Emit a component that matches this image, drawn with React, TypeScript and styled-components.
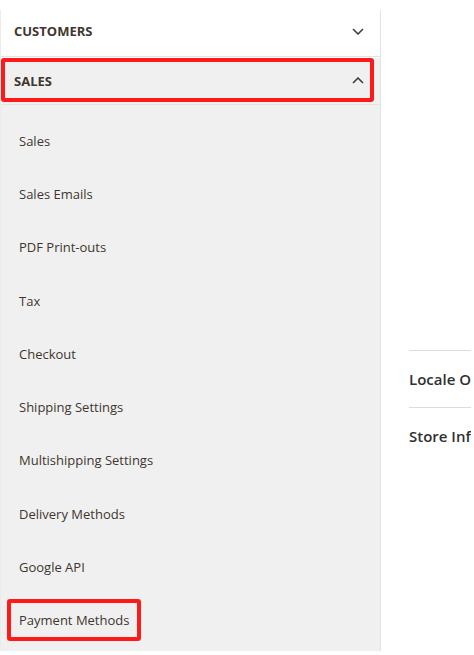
import styled, { createGlobalStyle } from 'styled-components'

const GlobalStyle = createGlobalStyle`
  html, body {
    margin: 0;
    padding: 0;
    background: #ffffff;
    overflow: hidden;
  }
  body {
    font-family: 'Open Sans', 'Liberation Sans', sans-serif;
    color: #333333;
  }
`

const salesLinks = [
  'Sales',
  'Sales Emails',
  'PDF Print-outs',
  'Tax',
  'Checkout',
  'Shipping Settings',
  'Multishipping Settings',
  'Delivery Methods',
  'Google API',
  'Payment Methods',
]

const Chevron = ({ up }: { up?: boolean }) => (
  <svg width="12" height="7" viewBox="0 0 12 7" fill="none">
    <polyline
      points={up ? '1,6 6,1 11,6' : '1,1 6,6 11,1'}
      stroke="#41362f"
      strokeWidth="1.5"
    />
  </svg>
)

const App = () => {
  return (
    <>
      <GlobalStyle />
      <Page>
        <SideNav>
          <Section>
            <SectionHead>
              <SectionTitle>Customers</SectionTitle>
              <Chevron />
            </SectionHead>
          </Section>
          <Section $open>
            <SectionHead $highlight>
              <SectionTitle>Sales</SectionTitle>
              <Chevron up />
            </SectionHead>
            <LinkList>
              {salesLinks.map((link) => (
                <LinkItem key={link}>
                  {link === 'Payment Methods' ? (
                    <Marked>{link}</Marked>
                  ) : (
                    link
                  )}
                </LinkItem>
              ))}
            </LinkList>
          </Section>
        </SideNav>
        <Content>
          <Fieldset>Locale Options</Fieldset>
          <Fieldset>Store Information</Fieldset>
        </Content>
      </Page>
    </>
  )
}

export default App

const Page = styled.div`
  display: flex;
  align-items: flex-start;
  width: 471px;
  height: 655px;
  overflow: hidden;
`

const SideNav = styled.nav`
  flex: 0 0 381px;
  box-sizing: border-box;
  margin-top: 10px;
  border-left: 1px solid #ececec;
  border-right: 1px solid #e3e3e3;
`

const Section = styled.div<{ $open?: boolean }>`
  background: ${(p) => (p.$open ? '#f0f0f0' : '#ffffff')};
  border-bottom: ${(p) => (p.$open ? 'none' : '1px solid #e3e3e3')};
`

const SectionHead = styled.div<{ $highlight?: boolean }>`
  display: flex;
  align-items: center;
  justify-content: space-between;
  box-sizing: border-box;
  height: ${(p) => (p.$highlight ? '44px' : '46px')};
  padding: ${(p) => (p.$highlight ? '1px 6px 0 9px' : '0 16px 4px 13px')};
  margin: ${(p) => (p.$highlight ? '1px 6px 2px 0' : '0')};
  border: ${(p) => (p.$highlight ? '4px solid #ff1a1a' : 'none')};
  border-radius: 3px;
`

const SectionTitle = styled.span`
  font-size: 13px;
  font-weight: 700;
  text-transform: uppercase;
  color: #41362f;
`

const LinkList = styled.ul`
  list-style: none;
  margin: 0;
  padding: 9px 0 4px;
  border-top: 1px solid #e3e3e3;
`

const LinkItem = styled.li`
  display: flex;
  align-items: center;
  height: 53.3px;
  padding-left: 18px;
  font-size: 13px;
  color: #41362f;
`

const Marked = styled.span`
  display: inline-flex;
  align-items: center;
  box-sizing: border-box;
  height: 42px;
  margin-left: -12px;
  padding: 0 8px;
  border: 4px solid #ff1a1a;
  border-radius: 3px;
`

const Content = styled.div`
  flex: 1;
  padding: 350px 0 0 28px;
  min-width: 0;
`

const Fieldset = styled.div`
  display: flex;
  align-items: center;
  height: 56px;
  border-top: 1px solid #dcdcdc;
  white-space: nowrap;
  font-size: 15px;
  font-weight: 600;
  color: #303030;
`
